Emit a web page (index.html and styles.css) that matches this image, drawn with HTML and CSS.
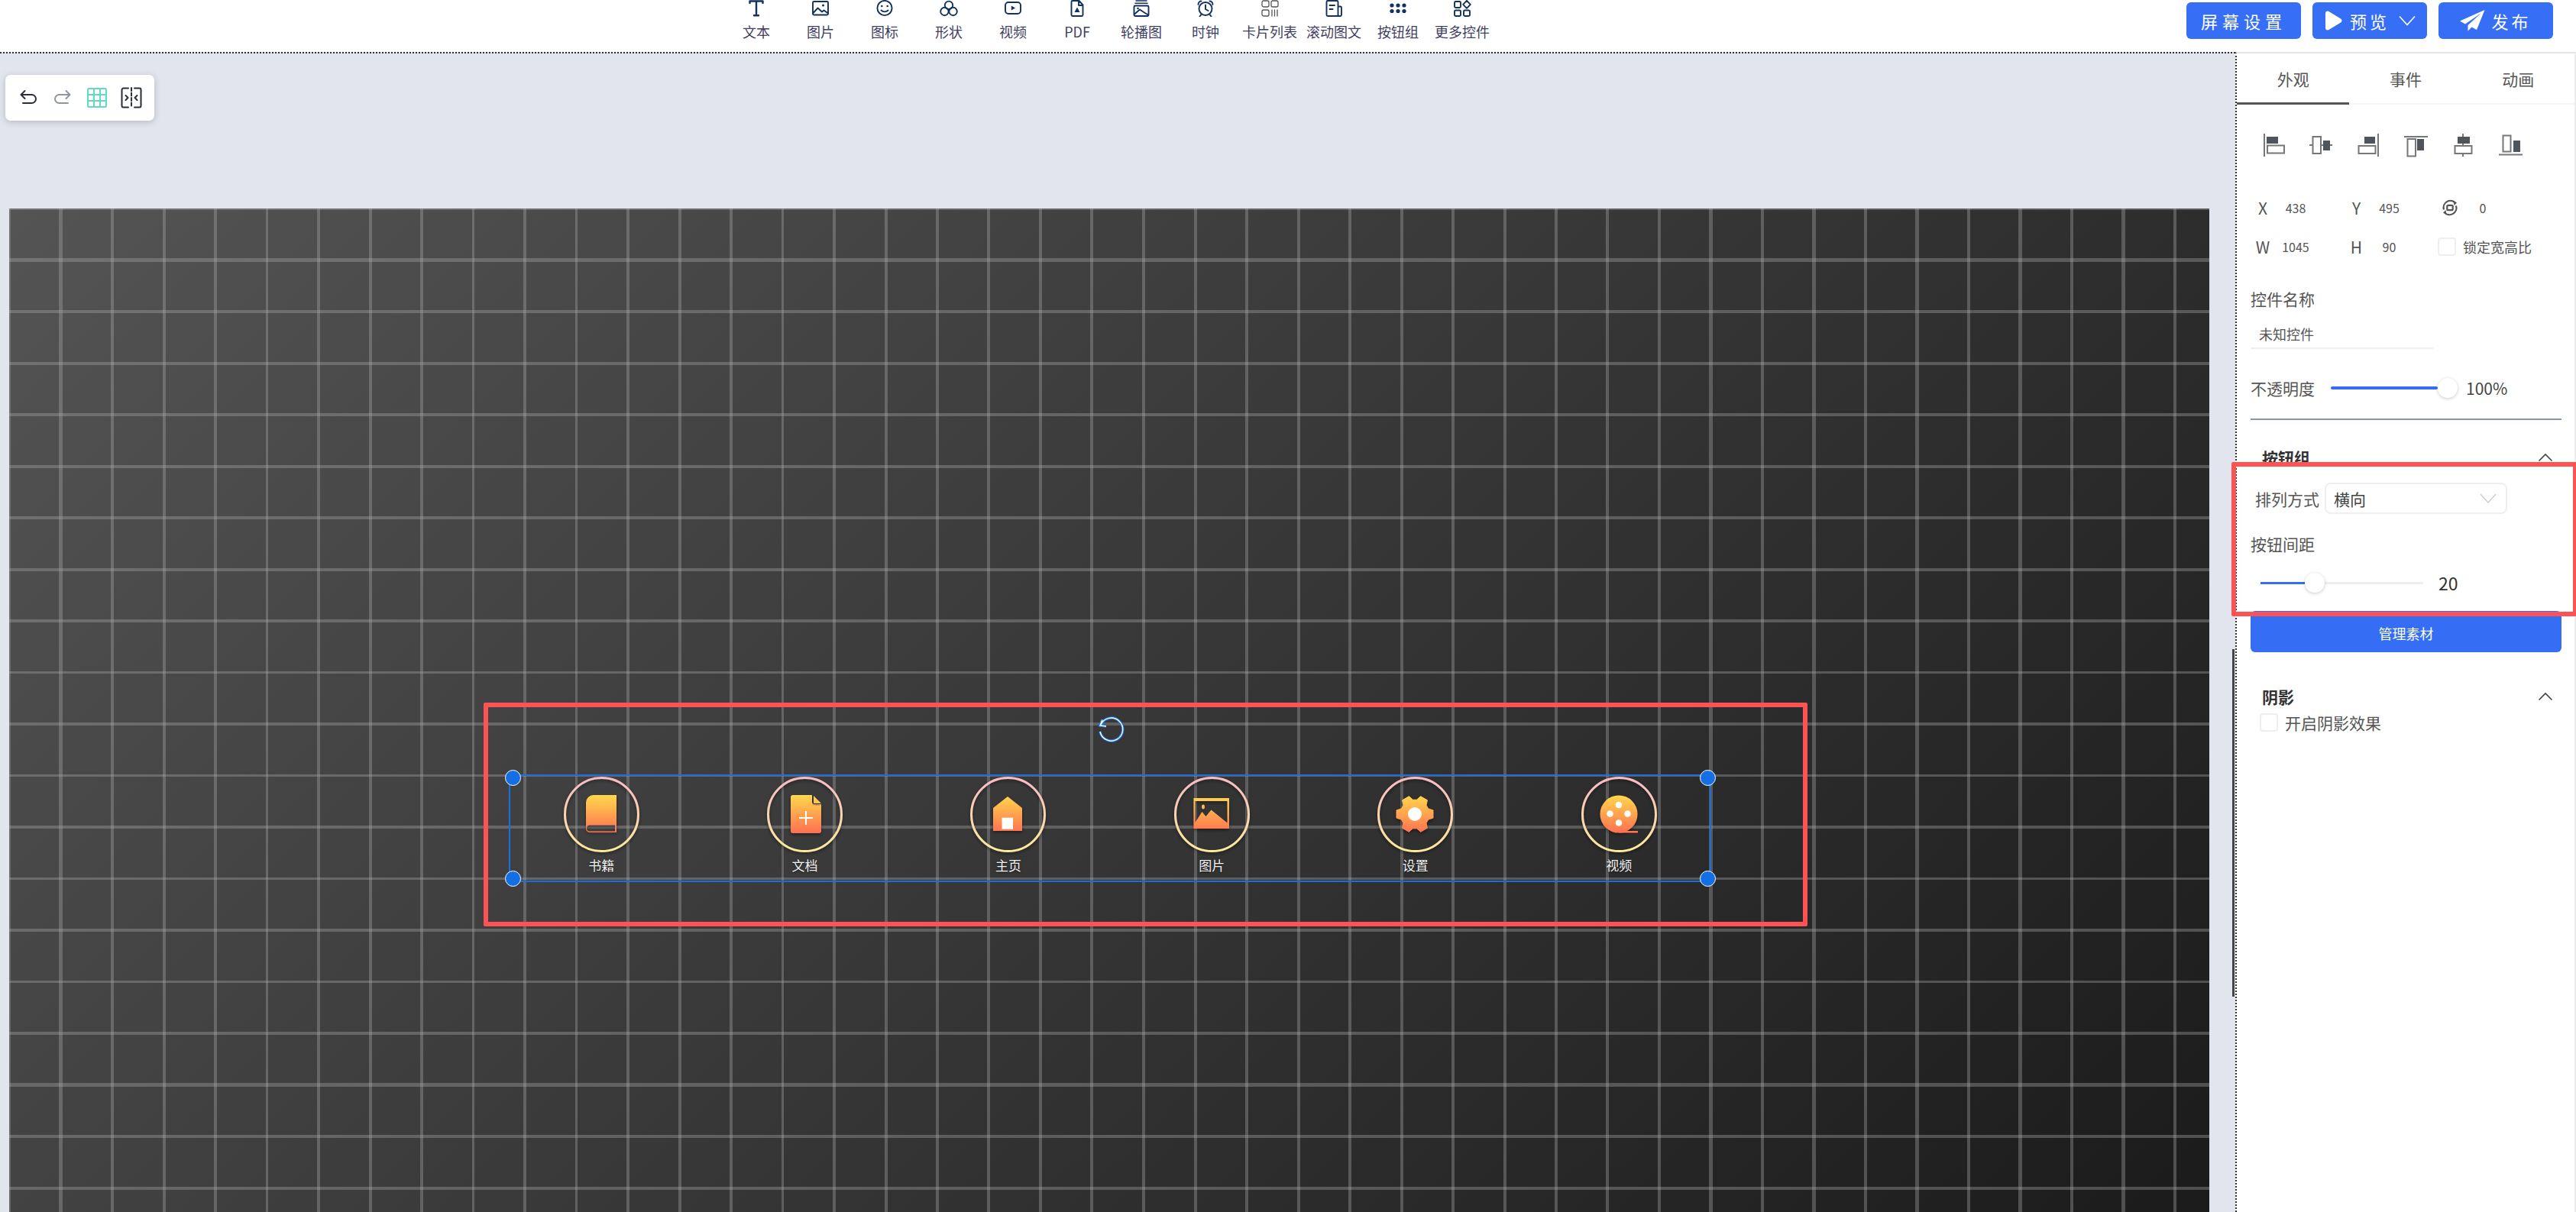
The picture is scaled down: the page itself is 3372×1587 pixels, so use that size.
FILE: index.html
```html
<!DOCTYPE html>
<html lang="zh-CN">
<head>
<meta charset="utf-8">
<title>大屏编辑器</title>
<link rel="stylesheet" href="styles.css">
</head>
<body>
<svg class="defs" width="0" height="0" aria-hidden="true">
  <defs>
    <linearGradient id="ring" x1="0" y1="0" x2="0" y2="1">
      <stop offset="0" stop-color="#f8bcc4"/>
      <stop offset="1" stop-color="#fdeb9a"/>
    </linearGradient>
    <linearGradient id="warm" gradientUnits="userSpaceOnUse" x1="0" y1="24" x2="0" y2="74">
      <stop offset="0" stop-color="#ffd84c"/>
      <stop offset="1" stop-color="#ff6f52"/>
    </linearGradient>
    <filter id="soft" x="-20%" y="-20%" width="140%" height="150%">
      <feDropShadow dx="0" dy="2" stdDeviation="2" flood-color="#000" flood-opacity=".45"/>
    </filter>
  </defs>
</svg>
<div class="app">
  <header class="topbar">
    <nav class="tools">
      <div class="tool"><svg viewBox="0 0 24 22" class="ti"><path d="M3.500 4V1.500h17V4M12 1.500V20M9 20.200h6" stroke-width="2.400"/></svg><span>文本</span></div>
      <div class="tool"><svg viewBox="0 0 24 22" class="ti"><rect x="2" y="2" width="20" height="17.500" rx="1.500"/><path d="M2.500 17l6-6.500 5.500 5 2.500-2 5.500 4"/><circle cx="15.500" cy="7" r="1.500" class="tf"/></svg><span>图片</span></div>
      <div class="tool"><svg viewBox="0 0 24 22" class="ti"><circle cx="12" cy="10.500" r="9.600"/><path d="M7.500 13.500c2.500 2.500 6.500 2.500 9 0"/><circle cx="8.300" cy="8" r="1.300" class="tf"/><circle cx="15.700" cy="8" r="1.300" class="tf"/></svg><span>图标</span></div>
      <div class="tool"><svg viewBox="0 0 24 22" class="ti"><circle cx="12" cy="6.800" r="5.200"/><circle cx="6.400" cy="15" r="5.200"/><circle cx="17.600" cy="15" r="5.200"/></svg><span>形状</span></div>
      <div class="tool"><svg viewBox="0 0 24 22" class="ti"><rect x="2" y="3" width="20" height="15" rx="4"/><path d="M9.800 7.600l5.200 3-5.200 3z" class="tf"/></svg><span>视频</span></div>
      <div class="tool"><svg viewBox="0 0 24 22" class="ti"><path d="M4.500 2.500a1.500 1.500 0 0 1 1.500-1.500h8.500l5 5.500v13a1.500 1.500 0 0 1-1.500 1.500H6a1.500 1.500 0 0 1-1.500-1.500zM14 1v6h5.500"/><path d="M12 9.500l3.500 6.500h-7z" class="tf"/></svg><span>PDF</span></div>
      <div class="tool"><svg viewBox="0 0 24 22" class="ti"><rect x="2.500" y="7.500" width="19" height="13.500" rx="1.500"/><path d="M5 1h14M4 4.300h16" stroke-width="1.500"/><circle cx="7.500" cy="11" r="1.300" class="tf"/><path d="M3 18.500l7-6 6 4 5 3"/></svg><span>轮播图</span></div>
      <div class="tool"><svg viewBox="0 0 24 22" class="ti"><circle cx="12" cy="11.500" r="8.500"/><path d="M12 6.500v5.500l3.500 2M2.500 6c0-3 2-4.500 4-4.500M21.500 6c0-3-2-4.500-4-4.500M6 19.500L4.500 21.500M18 19.500l1.500 2"/></svg><span>时钟</span></div>
      <div class="tool"><svg viewBox="0 0 24 22" class="ti ti-thin"><rect x="2" y="1" width="9" height="8" rx="2"/><rect x="14" y="1" width="9" height="8" rx="2"/><rect x="2" y="13" width="9" height="8" rx="2"/><path d="M15 13v8M18.500 13v8M22 13v8"/></svg><span>卡片列表</span></div>
      <div class="tool"><svg viewBox="0 0 24 22" class="ti"><path d="M2.500 2.500a1.500 1.500 0 0 1 1.500-1.500h12a1.500 1.500 0 0 1 1.500 1.500V20a1.500 1.500 0 0 1-1.500 1H4a1.500 1.500 0 0 1-1.500-1.500zM17.500 8.500h3a1.500 1.500 0 0 1 1.500 1.500v9.500a1.500 1.500 0 0 1-1.500 1.500H16M6.500 7h6.500M6.500 12h4"/></svg><span>滚动图文</span></div>
      <div class="tool"><svg viewBox="0 0 24 22" class="tf-only"><circle cx="4" cy="7" r="2.600"/><circle cx="12" cy="7" r="2.600"/><circle cx="20" cy="7" r="2.600"/><circle cx="4" cy="14.500" r="2.600"/><circle cx="12" cy="14.500" r="2.600"/><circle cx="20" cy="14.500" r="2.600"/></svg><span>按钮组</span></div>
      <div class="tool"><svg viewBox="0 0 24 22" class="ti"><rect x="2" y="2" width="8" height="8" rx="1.500"/><path d="M18 .8l4.800 5-4.800 5-4.800-5z"/><rect x="2" y="13.500" width="8" height="7.500" rx="1.500"/><rect x="14" y="13.500" width="8" height="7.500" rx="1.500"/></svg><span>更多控件</span></div>
    </nav>
    <div class="actions">
      <button class="act act-wide">屏幕设置</button>
      <button class="act"><svg class="a-play" viewBox="0 0 25 28"><path d="M2 4.500c0-2.500 2.500-3.800 4.500-2.600l15.500 9.500c2 1.200 2 4 0 5.200L6.500 26c-2 1.200-4.500 0-4.500-2.600z"/></svg><span>预览</span><svg class="a-chev" viewBox="0 0 22 14"><path d="M1 1.500l10 11 10-11"/></svg></button>
      <button class="act"><svg class="a-plane" viewBox="0 0 33 28"><path d="M32.500 0L0 14.500l7 4L28 4 10.500 20v7.500l5-5 6.500 3.500z"/></svg><span>发布</span></button>
    </div>
  </header>

  <main class="body">
    <section class="work">
      <div class="float-tools">
        <svg viewBox="0 0 28 28" class="ft"><path d="M9.500 5L4.500 10l5 5M5 10h13.500a5.500 5.500 0 0 1 0 11H7"/></svg>
        <svg viewBox="0 0 28 28" class="ft ft-off"><path d="M18.500 5l5 5-5 5M23 10H9.500a5.500 5.500 0 0 0 0 11H21"/></svg>
        <svg viewBox="0 0 28 28" class="ft ft-grid"><rect x="2" y="2" width="24" height="24" rx="1.500"/><path d="M10 2v24M18 2v24M2 10h24M2 18h24"/></svg>
        <svg viewBox="0 0 28 28" class="ft"><path d="M10 1.500H3.500a2 2 0 0 0-2 2v21a2 2 0 0 0 2 2H10M18 1.500h6.500a2 2 0 0 1 2 2v21a2 2 0 0 1-2 2H18"/><path d="M14 1v26" stroke-dasharray="4 2.500"/><path d="M6.500 11l3 3-3 3M21.500 11l-3 3 3 3"/></svg>
      </div>

      <div class="canvas">
        <div class="sel">
          <i class="h h-tl"></i><i class="h h-tr"></i><i class="h h-bl"></i><i class="h h-br"></i>
          <svg class="rot" viewBox="0 0 38 38"><path class="rot-b" d="M9 5.500L6 13l8 1M7 12a15 15 0 1 1-1 9"/><path class="rot-w" d="M9 5.500L6 13l8 1M7 12a15 15 0 1 1-1 9"/></svg>
        </div>
        <div class="btn-group">
          <div class="bg-item">
            <svg viewBox="0 0 99 99"><circle class="ring" cx="49.500" cy="49.500" r="48"/><path class="ic" fill-rule="evenodd" d="M39 24h30v49H34a5 5 0 0 1-5-5V34a10 10 0 0 1 10-10zM34 63.500a4 4 0 0 0 0 8h33v-8z"/></svg>
            <span>书籍</span>
          </div>
          <div class="bg-item">
            <svg viewBox="0 0 99 99"><circle class="ring" cx="49.500" cy="49.500" r="48"/><path class="ic" d="M34 24h25v9a3 3 0 0 0 3 3h9v35a3 3 0 0 1-3 3H34a3 3 0 0 1-3-3V27a3 3 0 0 1 3-3z"/><path class="ic" d="M61 25l10 10h-9a1 1 0 0 1-1-1z"/><path class="plus" d="M51 45v18M42 54h18"/></svg>
            <span>文档</span>
          </div>
          <div class="bg-item">
            <svg viewBox="0 0 99 99"><circle class="ring" cx="49.500" cy="49.500" r="48"/><path class="ic" d="M49 26l19 15v30H30V41z"/><rect class="wh" x="41.500" y="53.700" width="14.500" height="15"/></svg>
            <span>主页</span>
          </div>
          <div class="bg-item">
            <svg viewBox="0 0 99 99"><circle class="ring" cx="49.500" cy="49.500" r="48"/><path class="ic" fill-rule="evenodd" d="M25.500 28h46.500v40H25.500zM27.500 32v28l9-14 5 6 7-8.500 21 17V32z"/><ellipse class="ic" cx="38" cy="39.500" rx="2" ry="3"/></svg>
            <span>图片</span>
          </div>
          <div class="bg-item">
            <svg viewBox="0 0 99 99"><circle class="ring" cx="49.500" cy="49.500" r="48"/><polygon class="ic gear" points="72.960,43.910 72.960,54.090 66.620,56.120 63.970,60.700 65.390,67.210 56.570,72.300 51.640,67.820 46.360,67.820 41.430,72.300 32.610,67.210 34.030,60.700 31.380,56.120 25.040,54.090 25.040,43.910 31.380,41.880 34.030,37.300 32.610,30.790 41.430,25.700 46.360,30.180 51.640,30.180 56.570,25.700 65.390,30.790 63.970,37.300 66.620,41.880"/><circle class="wh" cx="49" cy="49" r="9"/></svg>
            <span>设置</span>
          </div>
          <div class="bg-item">
            <svg viewBox="0 0 99 99"><circle class="ring" cx="49.500" cy="49.500" r="48"/><circle class="ic" cx="49" cy="49" r="24.500"/><rect class="ic" x="49" y="71" width="25" height="2.500"/><circle class="wh" cx="49" cy="37" r="4.300"/><circle class="wh" cx="37.500" cy="48.500" r="4.300"/><circle class="wh" cx="60.500" cy="48.500" r="4.300"/><circle class="wh" cx="49" cy="60.500" r="4.300"/></svg>
            <span>视频</span>
          </div>
        </div>
      </div>
      <div class="vscroll"></div>
    </section>

    <aside class="panel">
      <div class="tabs">
        <div class="tab tab-on">外观</div>
        <div class="tab">事件</div>
        <div class="tab">动画</div>
      </div>
      <div class="aligns">
        <svg viewBox="0 0 30 30" class="al"><path class="l" d="M3 0v30"/><rect class="f" x="6" y="4" width="15" height="9"/><rect class="o" x="7" y="15.500" width="22" height="10"/></svg>
        <svg viewBox="0 0 30 30" class="al"><path class="l" d="M0 15h30"/><rect class="o w" x="4.500" y="4" width="10.500" height="22"/><rect class="f" x="18" y="9" width="9" height="13"/></svg>
        <svg viewBox="0 0 30 30" class="al"><path class="l" d="M28 0v30"/><rect class="f" x="10" y="4" width="14" height="9"/><rect class="o" x="2.500" y="16" width="22" height="10"/></svg>
        <svg viewBox="0 0 30 30" class="al"><path class="l" d="M0 4h31"/><rect class="o" x="4.500" y="7" width="10.500" height="22.500"/><rect class="f" x="17" y="7" width="9" height="15"/></svg>
        <svg viewBox="0 0 30 30" class="al"><path class="l" d="M15 0v30"/><rect class="f" x="8" y="4" width="16" height="9"/><rect class="o w" x="4.500" y="16" width="22" height="10"/></svg>
        <svg viewBox="0 0 30 30" class="al"><path class="l" d="M0 27.500h31"/><rect class="o" x="5.500" y="2.500" width="10" height="21"/><rect class="f" x="19" y="9" width="9" height="15"/></svg>
      </div>

      <div class="coords">
        <div class="co"><span class="co-l">X</span><span class="co-v">438</span></div>
        <div class="co"><span class="co-l">Y</span><span class="co-v">495</span></div>
        <div class="co"><svg viewBox="0 0 24 24" class="rot-ic"><path d="M4 14.500A9 9 0 0 1 19 5.500M20 9.500A9 9 0 0 1 5 18.500"/><path class="rf" d="M16.500 3l4.500 2.500-3.500 3.500zM7.500 21L3 18.500 6.500 15z"/><rect x="8.300" y="8.800" width="7.400" height="6.400" rx="1.500"/></svg><span class="co-v">0</span></div>
      </div>
      <div class="coords coords-2">
        <div class="co"><span class="co-l">W</span><span class="co-v">1045</span></div>
        <div class="co"><span class="co-l">H</span><span class="co-v">90</span></div>
        <div class="co co-lock"><i class="chk"></i><span>锁定宽高比</span></div>
      </div>

      <div class="field-l field-name">控件名称</div>
      <div class="name-in">未知控件</div>

      <div class="opacity">
        <span class="field-l">不透明度</span>
        <span class="op-track"></span>
        <i class="thumb"></i>
        <span class="op-v">100%</span>
      </div>
      <div class="divider"></div>

      <div class="sec"><b>按钮组</b><svg viewBox="0 0 20 12" class="up"><path d="M1.500 10.500L10 2l8.500 8.500"/></svg></div>
      <div class="arrange">
        <span class="field-l">排列方式</span>
        <div class="select"><span>横向</span><svg viewBox="0 0 22 13" class="down"><path d="M1 1l10 11L21 1"/></svg></div>
      </div>
      <div class="field-l gap-l">按钮间距</div>
      <div class="gap-row">
        <div class="track"><span class="fill"></span><i class="thumb thumb-on"></i></div>
        <span class="gap-v">20</span>
      </div>
      <button class="manage">管理素材</button>
      <div class="sec sec-2"><b>阴影</b><svg viewBox="0 0 20 12" class="up"><path d="M1.500 10.500L10 2l8.500 8.500"/></svg></div>
      <div class="shadow-row"><i class="chk"></i><span>开启阴影效果</span></div>
    </aside>
  </main>

  <div class="mark mark-a"></div>
  <div class="mark mark-b"></div>
</div>
</body>
</html>
```

FILE: styles.css
```css
* { box-sizing: border-box; }
html, body { margin: 0; padding: 0; height: 100%; overflow: hidden; background: #fff; }
body { font-family: "Noto Sans CJK SC", "Noto Sans", sans-serif; color: #555; }
.defs { position: absolute; }
i { display: block; font-style: normal; }

.app { position: relative; width: 3372px; height: 1587px; display: flex; flex-direction: column; overflow: hidden; }

/* top bar */
.topbar { height: 68px; flex: none; display: flex; justify-content: space-between; padding: 0 30px 0 948px; background: #fff; }
.tools { display: flex; }
.tool { width: 84px; display: flex; flex-direction: column; align-items: center; color: #3f3f5f; font-size: 18px; line-height: 20px; white-space: nowrap; }
.tool svg { width: 24px; height: 22px; display: block; margin-bottom: 9px; flex: none; }
.ti { fill: none; stroke: #12315e; stroke-width: 1.9; stroke-linejoin: round; stroke-linecap: round; }
.ti-thin { stroke: #555; stroke-width: 1.3; }
.tf { fill: #12315e; stroke: none; }
.tf-only { fill: #12315e; }
.actions { display: flex; gap: 15px; padding-top: 3px; }
.act { width: 150px; height: 48px; border: 0; border-radius: 6px; background: #366ef6; color: #fff; font: 400 22px/48px "Noto Sans CJK SC", sans-serif; letter-spacing: 4px; display: flex; align-items: center; justify-content: center; padding: 0; }
.act-wide { letter-spacing: 6px; }
.a-play { width: 25px; height: 28px; fill: #fff; margin-right: 9px; }
.a-chev { width: 22px; height: 14px; fill: none; stroke: #fff; stroke-width: 1.6; margin-left: 12px; }
.a-plane { width: 33px; height: 28px; fill: #fff; margin-right: 8px; }

/* main */
.body { flex: 1; display: flex; min-height: 0; }
.work { position: relative; flex: 1; min-width: 0; background: #e2e5ee; border-top: 2px dotted #333; padding: 203px 0 0 12px; overflow: hidden; }
.float-tools { position: absolute; left: 7px; top: 28px; width: 195px; height: 60px; background: #fff; border-radius: 7px; box-shadow: 0 2px 8px rgba(40,50,70,.25); display: flex; align-items: center; gap: 17px; padding-left: 16px; }
.ft { width: 28px; height: 28px; flex: none; fill: none; stroke: #2a2e36; stroke-width: 2; stroke-linecap: round; stroke-linejoin: round; }
.ft-off { stroke: #8d96a1; }
.ft-grid { stroke: #5fd9c9; }
.vscroll { position: absolute; left: 2922px; top: 780px; width: 3px; height: 455px; background: #444; }

.canvas {
  position: relative;
  width: 2880px;
  height: 1620px;
  background:
    repeating-linear-gradient(90deg, rgba(170,170,170,.36) 0 2px, transparent 2px 65.5px, rgba(170,170,170,.36) 65.5px 67.5px),
    repeating-linear-gradient(180deg, rgba(170,170,170,.36) 0 2px, transparent 2px 65.5px, rgba(170,170,170,.36) 65.5px 67.5px),
    linear-gradient(135deg, #545454, #171717);
}
.sel { position: absolute; left: 654px; top: 741px; width: 1574px; height: 141px; border: 2px solid #1a6fe0; }
.h { position: absolute; width: 21px; height: 21px; border-radius: 50%; background: #146fe4; border: 1.5px solid #fff; }
.h-tl { left: -7px; top: -8.5px; }
.h-tr { right: -7.5px; top: -8.5px; }
.h-bl { left: -7px; bottom: -7.5px; }
.h-br { right: -7.5px; bottom: -7.5px; }
.rot { position: absolute; left: 766px; top: -79px; width: 38px; height: 38px; fill: none; }
.rot-b { stroke: #1a74e8; stroke-width: 3.600; }
.rot-w { stroke: #fff; stroke-width: 1.400; }

.btn-group { position: absolute; left: 642px; top: 744px; display: grid; grid-template-columns: repeat(6, 266.4px); }
.bg-item { display: flex; flex-direction: column; align-items: center; color: #f2f2f2; font-size: 17px; line-height: 22px; text-shadow: 0 1px 2px rgba(0,0,0,.6); }
.bg-item svg { width: 99px; height: 99px; display: block; margin-bottom: 6px; overflow: visible; }
.ring { fill: none; stroke: url(#ring); stroke-width: 3; filter: url(#soft); }
.ic { fill: url(#warm); filter: url(#soft); }
.gear { stroke: url(#warm); stroke-width: 1; stroke-linejoin: round; }
.wh { fill: #fff; }
.plus { stroke: #fff; stroke-width: 2; fill: none; }

/* side panel */
.panel { width: 446px; flex: none; background: #fff; border-left: 2px dotted #333; border-top: 2px solid #e6e6e6; border-right: 2px solid #eee; padding: 0 17px 0 18px; font-size: 21px; line-height: 30px; color: #555; }
.tabs { display: flex; margin: 0 -17px 0 -18px; height: 67px; border-bottom: 2px solid #f5f5f5; }
.tab { width: 148px; height: 67px; text-align: center; line-height: 66px; font-size: 21px; }
.tab-on { border-bottom: 3px solid #555; }
.aligns { display: flex; gap: 32px; margin: 38px 0 0 15px; }
.al { width: 30px; height: 30px; flex: none; overflow: visible; }
.al .l { stroke: #777; stroke-width: 2; fill: none; }
.al .f { fill: #50555c; }
.al .o { fill: none; stroke: #777; stroke-width: 2; }
.al .o.w { fill: #fff; }
.coords { display: flex; margin: 52px 0 0 4px; height: 30px; align-items: center; }
.coords-2 { margin-top: 21px; }
.co { width: 122.500px; display: flex; align-items: center; flex: none; }
.co-l { width: 24px; text-align: center; font-size: 21px; color: #555; }
.co-v { width: 62px; text-align: center; font-size: 16px; color: #555; }
.rot-ic { width: 24px; height: 24px; flex: none; fill: none; stroke: #555; stroke-width: 2.200; }
.rot-ic .rf { fill: #555; stroke: none; }
.co-lock { margin-left: -4px; font-size: 18px; white-space: nowrap; }
.chk { width: 24px; height: 24px; flex: none; border: 2px solid #eee; border-radius: 4px; background: #fff; }
.co-lock .chk { margin-right: 9px; }
.field-l { color: #555; font-size: 21px; line-height: 30px; }
.field-name { margin-top: 38px; }
.name-in { width: 239px; height: 38px; margin-top: 13px; padding-left: 11px; font-size: 18px; line-height: 36px; border-bottom: 2px solid #eee; }
.opacity { display: flex; align-items: center; height: 30px; margin-top: 36px; }
.op-track { width: 140px; height: 4px; margin-left: 21px; background: #356ef5; border-radius: 2px; }
.thumb { width: 26px; height: 26px; border-radius: 50%; background: #fff; box-shadow: 0 1px 4px rgba(0,0,0,.22); flex: none; }
.op-v { margin-left: 11px; font-size: 21px; color: #444; }
.divider { height: 2px; background: #8794a9; margin-top: 25px; }
.sec { display: flex; align-items: center; justify-content: space-between; height: 30px; padding: 0 11px 0 15px; margin-top: 34px; color: #333; }
.sec b { font-weight: 700; font-size: 21px; }
.up { width: 20px; height: 12px; fill: none; stroke: #444; stroke-width: 1.600; }
.arrange { display: flex; align-items: center; gap: 7px; height: 41px; margin-top: 18px; padding-left: 6px; }
.select { width: 239px; height: 41px; border: 2px solid #eee; border-radius: 8px; display: flex; align-items: center; justify-content: space-between; padding: 0 12px 0 10px; color: #444; }
.down { width: 22px; height: 13px; fill: none; stroke: #ccc; stroke-width: 1.400; }
.gap-l { margin-top: 24px; }
.gap-row { display: flex; align-items: center; height: 30px; margin-top: 21px; padding-left: 13px; }
.track { position: relative; width: 213px; height: 3px; background: #eee; }
.fill { display: block; width: 58px; height: 3px; background: #356ef5; }
.thumb-on { position: absolute; left: 58px; top: -12px; }
.gap-v { margin-left: 20px; font-size: 23px; color: #333; }
.manage { display: block; width: 100%; height: 54px; margin-top: 22px; border: 0; border-radius: 6px; background: #356ef5; color: #fff; font: 400 18px/50px "Noto Sans CJK SC", sans-serif; padding: 4px 0 0; }
.sec-2 { margin-top: 43px; }
.shadow-row { display: flex; align-items: center; height: 30px; margin-top: 4px; padding-left: 12px; gap: 9px; }

/* red annotation frames */
.mark { position: absolute; border: 6px solid #ff5252; border-radius: 2px; pointer-events: none; }
.mark-a { left: 633px; top: 920px; width: 1733px; height: 293px; }
.mark-b { left: 2921px; top: 605px; width: 453px; height: 202px; }
```
